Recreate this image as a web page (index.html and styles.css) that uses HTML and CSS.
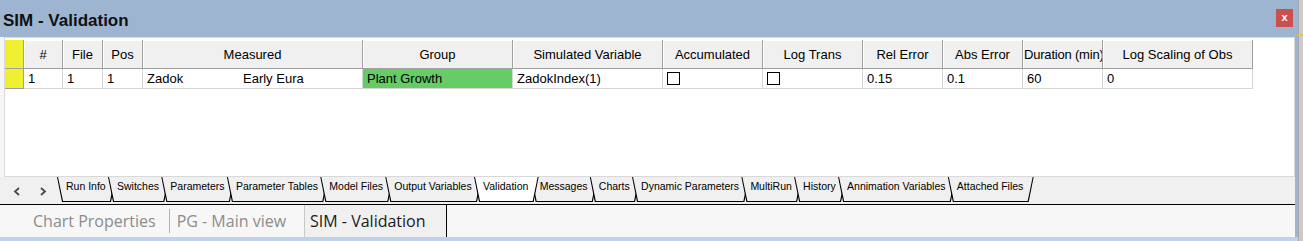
FILE: index.html
```html
<!DOCTYPE html>
<html lang="en">
<head>
    <meta charset="UTF-8">
    <title>SIM - Validation</title>
    <link rel="stylesheet" href="styles.css">
</head>
<body>
    <div class="screen">
        <div class="window">
            <div class="titlebar">
                <span class="title">SIM - Validation</span>
                <span class="close">x</span>
            </div>
            <div class="frame">
                <div class="pane">
                    <div class="client">
                        <div class="grid">
                            <div class="ind"></div>
                            <div class="hd">#</div>
                            <div class="hd">File</div>
                            <div class="hd">Pos</div>
                            <div class="hd">Measured</div>
                            <div class="hd">Group</div>
                            <div class="hd">Simulated Variable</div>
                            <div class="hd">Accumulated</div>
                            <div class="hd">Log Trans</div>
                            <div class="hd">Rel Error</div>
                            <div class="hd">Abs Error</div>
                            <div class="hd tight">Duration (min)</div>
                            <div class="hd">Log Scaling of Obs</div>

                            <div class="ind"></div>
                            <div class="cell">1</div>
                            <div class="cell">1</div>
                            <div class="cell">1</div>
                            <div class="cell"><span class="name">Zadok</span><span>Early Eura</span></div>
                            <div class="cell group">Plant Growth</div>
                            <div class="cell">ZadokIndex(1)</div>
                            <div class="cell"><span class="check"></span></div>
                            <div class="cell"><span class="check"></span></div>
                            <div class="cell">0.15</div>
                            <div class="cell">0.1</div>
                            <div class="cell">60</div>
                            <div class="cell">0</div>
                        </div>
                    </div>

                    <div class="tabstrip">
                        <div class="scroll">
                            <svg width="8" height="9" viewBox="0 0 8 9"><polyline points="6,1 2,4.5 6,8" fill="none" stroke="#4a4a4a" stroke-width="1.8"/></svg>
                        </div>
                        <div class="scroll">
                            <svg width="8" height="9" viewBox="0 0 8 9"><polyline points="2,1 6,4.5 2,8" fill="none" stroke="#4a4a4a" stroke-width="1.8"/></svg>
                        </div>
                        <div class="tabs">
                            <div class="tab">Run Info</div>
                            <div class="tab">Switches</div>
                            <div class="tab">Parameters</div>
                            <div class="tab">Parameter Tables</div>
                            <div class="tab">Model Files</div>
                            <div class="tab">Output Variables</div>
                            <div class="tab active">Validation</div>
                            <div class="tab">Messages</div>
                            <div class="tab">Charts</div>
                            <div class="tab">Dynamic Parameters</div>
                            <div class="tab">MultiRun</div>
                            <div class="tab">History</div>
                            <div class="tab">Annimation Variables</div>
                            <div class="tab">Attached Files</div>
                        </div>
                    </div>

                    <div class="docbar">
                        <div class="doc">Chart Properties</div>
                        <div class="sep"></div>
                        <div class="doc">PG - Main view</div>
                        <div class="doc current">SIM - Validation</div>
                    </div>
                </div>
            </div>
            <div class="bottom-edge"></div>
        </div>
        <div class="side"><div class="side-mark"></div></div>
    </div>
</body>
</html>
```

FILE: styles.css
```css
* {
    margin: 0;
    padding: 0;
    box-sizing: border-box;
}

html, body {
    width: 1303px;
    height: 241px;
    overflow: hidden;
}

body {
    font-family: "Liberation Sans", Arial, sans-serif;
    background: #9db5d1;
    color: #000;
}

.screen {
    display: flex;
    height: 241px;
}

.window {
    width: 1298px;
    display: flex;
    flex-direction: column;
}

/* title bar */
.titlebar {
    height: 37px;
    display: flex;
    justify-content: space-between;
    align-items: flex-start;
    padding: 0 5px 0 3px;
    background: #9db5d1;
}

.title {
    font-size: 17px;
    font-weight: bold;
    line-height: 32px;
    padding-top: 5px;
    color: #111;
}

.close {
    margin-top: 9px;
    width: 17px;
    height: 18px;
    background: #c9504f;
    color: #fff;
    font-size: 11px;
    font-weight: bold;
    text-align: center;
    line-height: 17px;
}

.frame {
    flex: 1;
    display: flex;
    padding-right: 3px;
    background: #9db5d1;
}

.pane {
    flex: 1;
    display: flex;
    flex-direction: column;
    background: #f6f6f6;
}

/* grid area */
.client {
    height: 140px;
    margin-left: 4px;
    padding-top: 2px;
    background: #fff;
    border: 1px solid #d9d9d9;
}

.grid {
    display: grid;
    grid-template-columns: 19px 39px 40px 40px 220px 150px 150px 100px 100px 80px 80px 80px 150px;
    grid-template-rows: 29px 20px;
    width: max-content;
    font-size: 13px;
}

.ind {
    background: #f0f032;
    border-right: 1px solid #a0a0a0;
    border-bottom: 1px solid #a0a0a0;
}

.hd {
    display: flex;
    align-items: center;
    justify-content: center;
    white-space: nowrap;
    overflow: hidden;
    background: #f0f0f0;
    border-right: 1px solid #a0a0a0;
    border-bottom: 1px solid #a0a0a0;
    box-shadow: inset 1px 1px 0 #fff;
}

.hd.tight {
    justify-content: flex-start;
    padding-left: 1px;
    letter-spacing: -0.2px;
}

.cell {
    display: flex;
    align-items: center;
    padding-left: 4px;
    white-space: nowrap;
    overflow: hidden;
    border-right: 1px solid #d6d6d6;
    border-bottom: 1px solid #d6d6d6;
}

.cell .name {
    display: inline-block;
    width: 96px;
}

.cell.group {
    background: #66cc66;
}

.check {
    width: 13px;
    height: 13px;
    border: 1px solid #000;
    background: #fff;
}

/* sheet tabs */
.tabstrip {
    height: 28px;
    display: flex;
    align-items: flex-start;
    padding-left: 4px;
    background: #f0f0f0;
    border-bottom: 1px solid #000;
}

.scroll {
    width: 26px;
    height: 27px;
    display: flex;
    align-items: center;
    justify-content: center;
    padding-top: 2px;
}

.tabs {
    display: flex;
    padding-left: 9px;
}

.tab {
    position: relative;
    margin-left: -8px;
    height: 25px;
    padding: 0 10.3px 0 9px;
    font-size: 10.5px;
    line-height: 18px;
    white-space: nowrap;
    background: #000;
    clip-path: polygon(0 0, 5px 100%, calc(100% - 5px) 100%, 100% 0);
}

.tab::before {
    content: "";
    position: absolute;
    inset: 0;
    z-index: -1;
    background: #f0f0f0;
    clip-path: polygon(1px 0, 6px calc(100% - 1px), calc(100% - 6px) calc(100% - 1px), calc(100% - 1px) 0);
}

.tab.active {
    z-index: 1;
}

.tab.active::before {
    background: #fff;
}

/* document tabs */
.docbar {
    height: 32px;
    display: flex;
    padding-left: 27px;
    background: #f7f7f7;
    font-family: "Open Sans", "Noto Sans", sans-serif;
    font-size: 16px;
}

.doc {
    display: flex;
    align-items: center;
    padding: 0 6px;
    color: #8c8c8c;
    white-space: nowrap;
}

.sep {
    width: 1px;
    margin: 4px 1px 4px 7px;
    background: #b4b4b4;
}

.doc.current {
    margin-left: 12px;
    padding: 0 20px 0 5px;
    color: #1a1a1a;
    background: #f0f0f0;
    border-left: 1px solid #c8c8c8;
    border-right: 1px solid #000;
}

.bottom-edge {
    height: 4px;
    background: #bfd2e9;
}

.side {
    width: 5px;
    background: linear-gradient(to right, #a6a6a6 0, #a6a6a6 1px, #cbcbcb 1px);
}

.side-mark {
    height: 2px;
    margin-top: 34px;
    background: #f0c040;
}
```
